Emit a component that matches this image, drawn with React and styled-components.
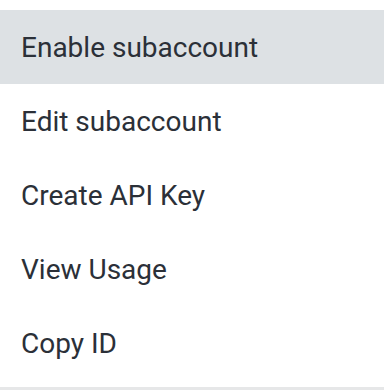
import React from 'react'
import styled, { createGlobalStyle } from 'styled-components'

const GlobalStyle = createGlobalStyle`
  html, body {
    margin: 0;
    padding: 0;
    background: #e6e7e8;
  }
  body {
    font-family: Roboto, "Liberation Sans", sans-serif;
  }
`

const Menu = styled.ul`
  list-style: none;
  margin: 0;
  padding: 10px 0 7px;
  background: #ffffff;
  width: 384px;
`

const Item = styled.li`
  display: flex;
  align-items: center;
  height: 74px;
  padding: 0 21px;
  box-sizing: border-box;
  font-size: 28px;
  color: #2b3038;
  background: ${props => (props.$active ? '#dde1e4' : 'transparent')};
  cursor: pointer;
`

const items = ['Enable subaccount', 'Edit subaccount', 'Create API Key', 'View Usage', 'Copy ID']

export default function App() {
  return (
    <>
      <GlobalStyle />
      <Menu>
        {items.map((label, i) => (
          <Item key={label} $active={i === 0}>
            {label}
          </Item>
        ))}
      </Menu>
    </>
  )
}
